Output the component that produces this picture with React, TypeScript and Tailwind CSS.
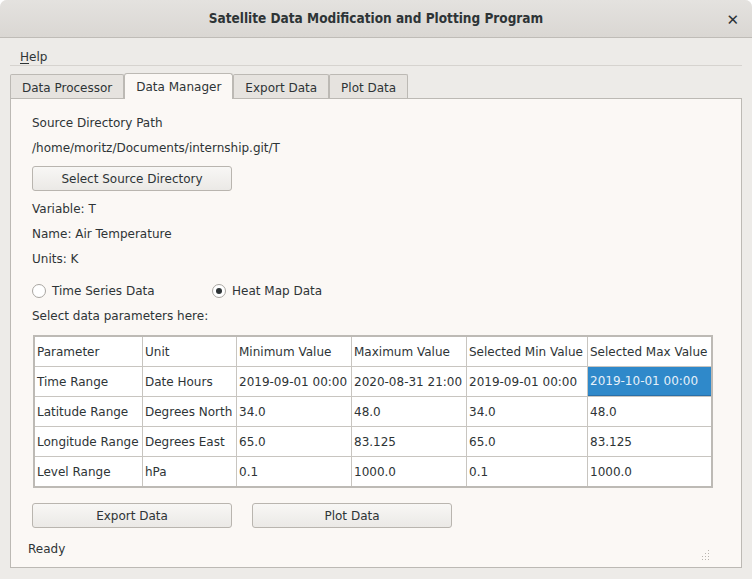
import React, { useState } from 'react';

const columns = ['Parameter', 'Unit', 'Minimum Value', 'Maximum Value', 'Selected Min Value', 'Selected Max Value'];
const colWidths = ['w-[108px]', 'w-[94px]', 'w-[115px]', 'w-[115px]', 'w-[121px]', 'w-[123px]'];

const rows = [
  ['Time Range', 'Date Hours', '2019-09-01 00:00', '2020-08-31 21:00', '2019-09-01 00:00', '2019-10-01 00:00'],
  ['Latitude Range', 'Degrees North', '34.0', '48.0', '34.0', '48.0'],
  ['Longitude Range', 'Degrees East', '65.0', '83.125', '65.0', '83.125'],
  ['Level Range', 'hPa', '0.1', '1000.0', '0.1', '1000.0'],
];

const tabs = ['Data Processor', 'Data Manager', 'Export Data', 'Plot Data'];

const Button: React.FC<{ label: string }> = ({ label }) => (
  <button className="w-[200px] h-[25px] rounded-[3px] border border-[#b9b5af] bg-gradient-to-b from-[#f8f7f5] to-[#ebe9e6] text-[12px] text-[#2e3436]">
    {label}
  </button>
);

const Radio: React.FC<{ label: string; checked: boolean; onClick: () => void }> = ({ label, checked, onClick }) => (
  <label className="flex items-center gap-[6px] cursor-default" onClick={onClick}>
    <span className="w-[14px] h-[14px] rounded-full border border-[#a9a6a1] bg-white flex items-center justify-center">
      {checked && <span className="w-[6px] h-[6px] rounded-full bg-[#2e3436]" />}
    </span>
    <span>{label}</span>
  </label>
);

const App: React.FC = () => {
  const [tab, setTab] = useState(1);
  const [mode, setMode] = useState<'series' | 'heat'>('heat');

  return (
    <div className="w-[752px] h-[579px] bg-[#edebe8] text-[#2e3436] font-['DejaVu_Sans',sans-serif] text-[12px] flex flex-col overflow-hidden rounded-t-[7px]">
      {/* title bar */}
      <div className="h-[38px] shrink-0 flex items-center justify-center relative bg-gradient-to-b from-[#e4e2df] to-[#dad7d3] border-b border-[#bfbcb7]">
        <span className="font-['DejaVu_Sans_Condensed',sans-serif] font-bold text-[13.5px] text-[#2e3436]">
          Satellite Data Modification and Plotting Program
        </span>
        <span className="absolute right-[13px] top-[9px] text-[15px] font-bold text-[#2e3436]">✕</span>
      </div>

      {/* menu */}
      <div className="px-[10px]">
        <div className="h-[28px] flex items-end border-b border-[#d6d3cf]">
          <span className="ml-[10px] leading-[16px]">
            <span className="underline underline-offset-2">H</span>elp
          </span>
        </div>
      </div>

      {/* tabs */}
      <div className="px-[10px] mt-[6px] flex items-end h-[26px]">
        {tabs.map((t, i) => (
          <div
            key={t}
            onClick={() => setTab(i)}
            className={
              i === tab
                ? 'h-[26px] px-[11px] flex items-center bg-[#fbf8f5] border border-[#bcb9b4] border-b-0 rounded-t-[3px] relative top-[1px] z-10'
                : 'h-[24px] px-[11px] flex items-center bg-[#e6e3df] border border-[#bcb9b4] border-b-0 rounded-t-[2px] pt-[2px]'
            }
          >
            {t}
          </div>
        ))}
      </div>

      {/* pane */}
      <div className="mx-[10px] h-[470px] bg-[#fbf8f5] border border-[#bcb9b4] px-[21px] pt-[16px] flex flex-col">
        <div className="h-[17px] leading-[17px]">Source Directory Path</div>
        <div className="h-[17px] leading-[17px] mt-[8px]">/home/moritz/Documents/internship.git/T</div>
        <div className="mt-[9px]">
          <Button label="Select Source Directory" />
        </div>
        <div className="h-[17px] leading-[17px] mt-[10px]">Variable: T</div>
        <div className="h-[17px] leading-[17px] mt-[8px]">Name: Air Temperature</div>
        <div className="h-[17px] leading-[17px] mt-[8px]">Units: K</div>
        <div className="flex mt-[14px] h-[17px] items-center">
          <div className="w-[180px]">
            <Radio label="Time Series Data" checked={mode === 'series'} onClick={() => setMode('series')} />
          </div>
          <Radio label="Heat Map Data" checked={mode === 'heat'} onClick={() => setMode('heat')} />
        </div>
        <div className="h-[17px] leading-[17px] mt-[9px]">Select data parameters here:</div>

        <div className="mt-[10px] ml-px w-[680px] border-2 border-[#bdbab5] bg-white">
          {[columns, ...rows].map((r, ri) => (
            <div key={ri} className={ri === 0 ? 'flex h-[29px]' : 'flex h-[30px] border-t border-[#c8c5c0]'}>
              {r.map((c, ci) => {
                const selected = ri === 1 && ci === 5;
                return (
                  <div
                    key={ci}
                    className={[
                      colWidths[ci],
                      'shrink-0 flex items-center pl-[2px] whitespace-nowrap overflow-hidden',
                      ci < 5 ? 'border-r border-[#c8c5c0]' : '',
                      selected ? 'bg-[#2f89ca] text-[#e6f0f9] border-b border-b-[#2a6fa8]' : '',
                    ].join(' ')}
                  >
                    {c}
                  </div>
                );
              })}
            </div>
          ))}
        </div>

        <div className="flex gap-[20px] mt-[15px]">
          <Button label="Export Data" />
          <Button label="Plot Data" />
        </div>

        <div className="mt-[13px] flex items-end justify-between pr-[10px]">
          <span className="h-[17px] leading-[17px] ml-[-4px]">Ready</span>
          <svg width="10" height="10" viewBox="0 0 10 10" className="mb-[-2px]">
            {[[8, 0], [8, 3], [5, 3], [8, 6], [5, 6], [2, 6], [8, 9], [5, 9], [2, 9], [-1, 9]].map(([x, y], i) => (
              <rect key={i} x={x} y={y} width="1" height="1" fill="#b8b4ae" />
            ))}
          </svg>
        </div>
      </div>
    </div>
  );
};

export default App;
